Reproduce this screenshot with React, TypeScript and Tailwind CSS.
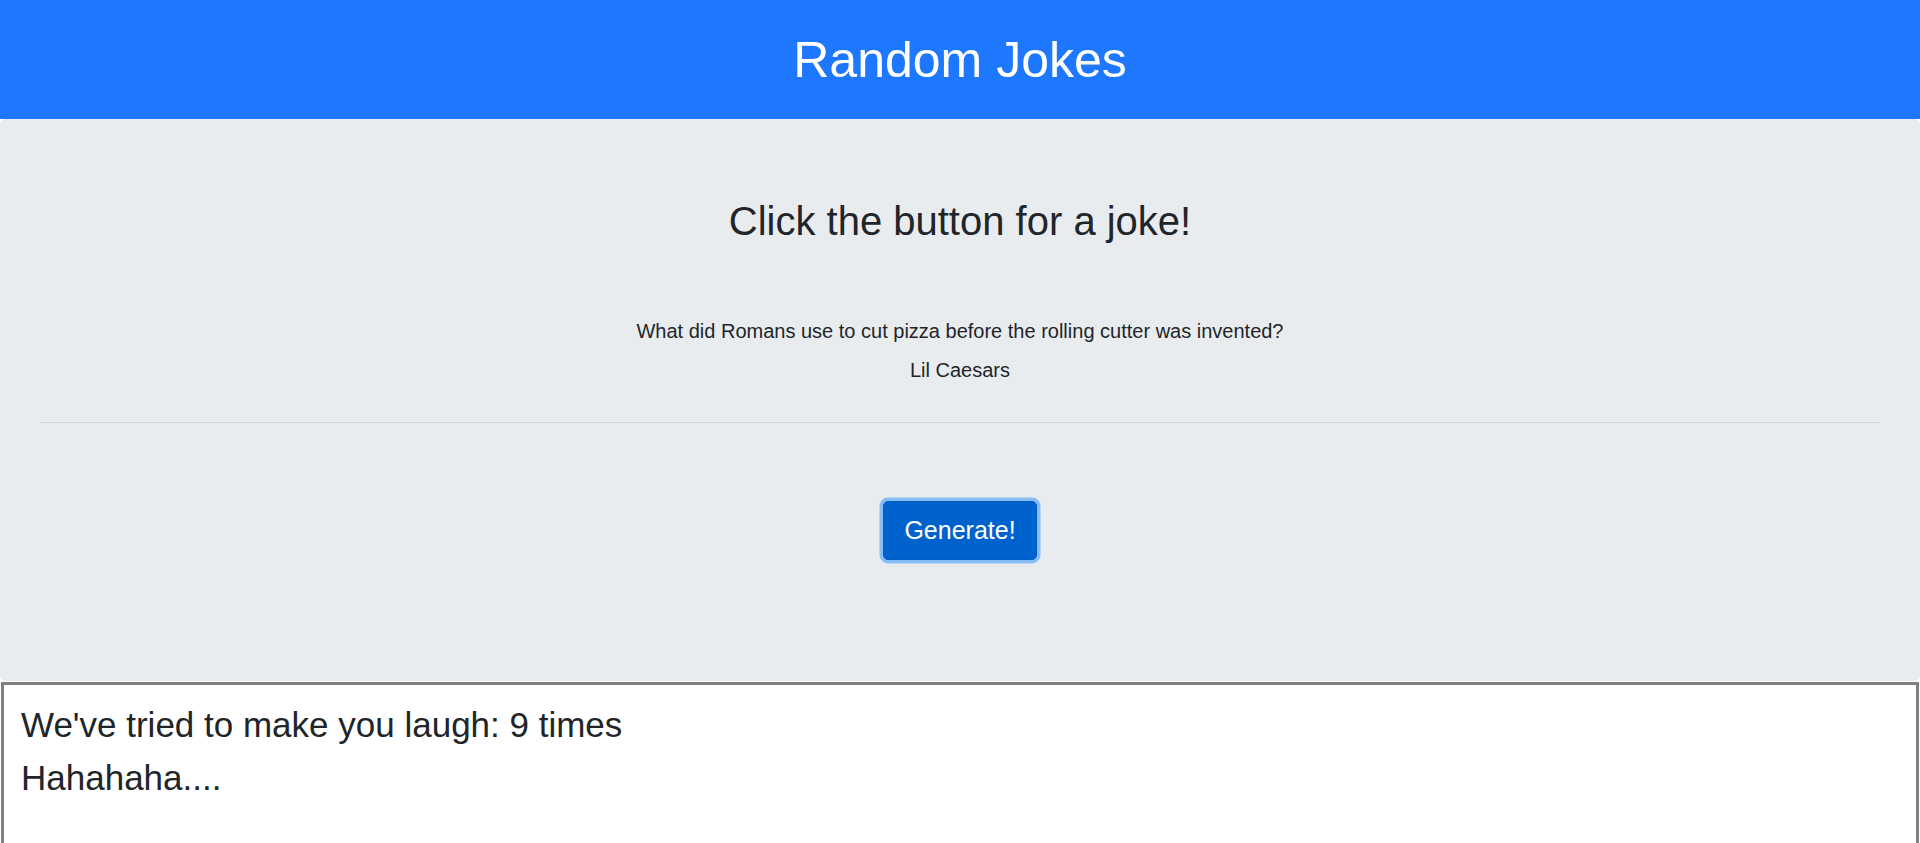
import React from "react";

export default function App() {
  return (
    <div className="min-h-screen bg-white text-[#212529]" style={{ fontFamily: '"Liberation Sans", Arial, sans-serif' }}>
      <header className="h-[119px] bg-[#1e78ff] flex items-center justify-center">
        <h1 className="text-[50px] leading-[60px] text-white font-normal">Random Jokes</h1>
      </header>
      <main className="h-[562px] bg-[#e9ecef] rounded-[5px] flex flex-col items-center pt-[78px]">
        <h2 className="text-[40px] leading-[48px] font-normal">Click the button for a joke!</h2>
        <p className="mt-[71px] text-[20px] leading-[30px]">What did Romans use to cut pizza before the rolling cutter was invented?</p>
        <p className="mt-[9px] text-[20px] leading-[30px]">Lil Caesars</p>
        <hr className="mt-[37px] self-stretch mx-[40px] border-0 border-t border-[rgba(0,0,0,0.1)]" />
        <button className="mt-[78px] h-[59px] w-[154px] flex items-center justify-center bg-[#0062cc] border border-[#005cbf] rounded-[5px] text-white text-[25px] shadow-[0_0_0_3.5px_rgba(38,143,255,0.5)]">
          Generate!
        </button>
      </main>
      <section className="mt-[1px] mx-[1px] h-[220px] border-[3px] border-[#808080] bg-white pt-[14px] pl-[17px]">
        <p className="text-[35px] leading-[52.5px]">We've tried to make you laugh: 9 times</p>
        <p className="text-[35px] leading-[52.5px]">Hahahaha....</p>
      </section>
    </div>
  );
}
